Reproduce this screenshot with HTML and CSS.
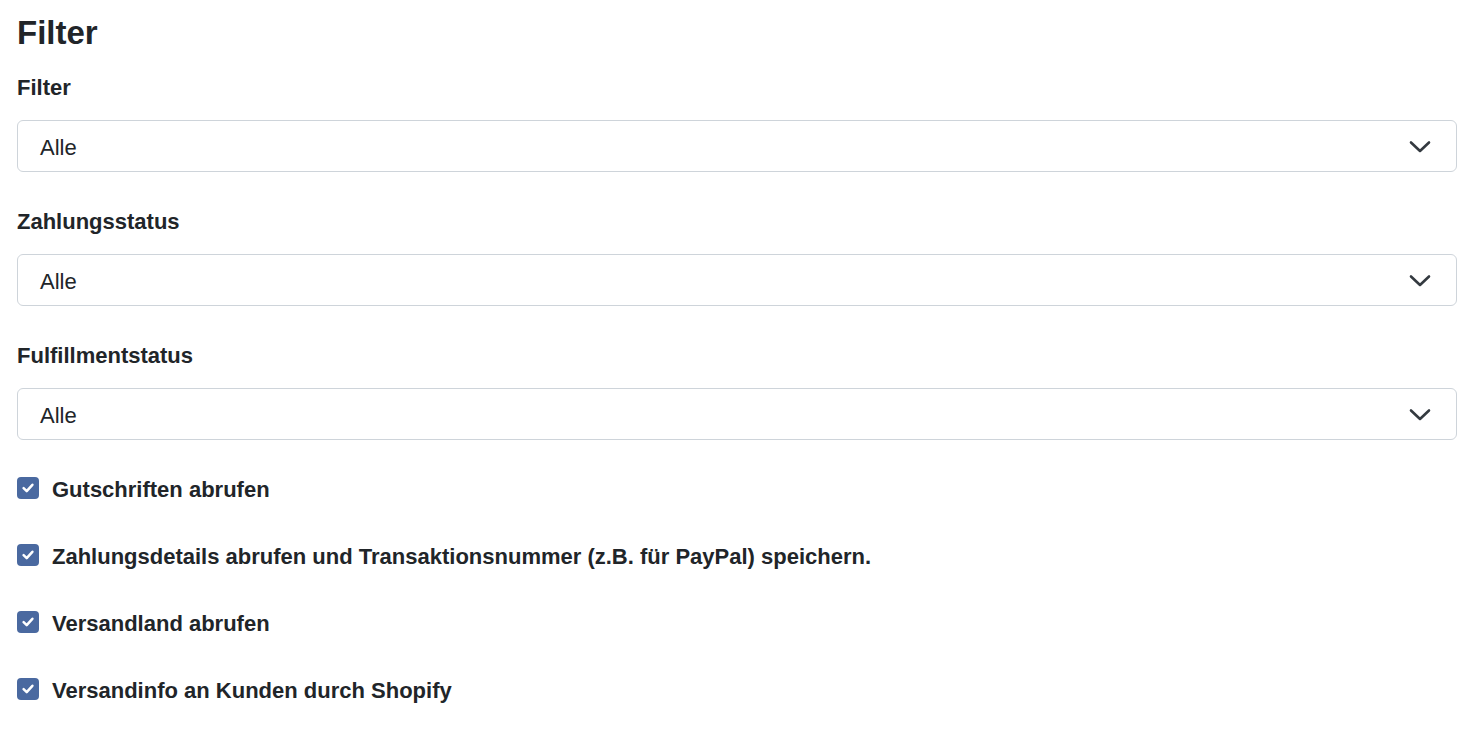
FILE: index.html
```html
<!DOCTYPE html>
<html lang="de">
<head>
<meta charset="utf-8">
<title>Filter</title>
<link rel="stylesheet" href="styles.css">
</head>
<body>
<main class="page">
  <h1 class="title">Filter</h1>

  <div class="field">
    <label class="label">Filter</label>
    <div class="select"><span class="value">Alle</span>
      <svg class="chev" width="22" height="14" viewBox="0 0 22 14"><path d="M2 2.5 L11 11 L20 2.5" fill="none" stroke="#343a40" stroke-width="2.6" stroke-linecap="round" stroke-linejoin="round"/></svg>
    </div>
  </div>

  <div class="field">
    <label class="label">Zahlungsstatus</label>
    <div class="select"><span class="value">Alle</span>
      <svg class="chev" width="22" height="14" viewBox="0 0 22 14"><path d="M2 2.5 L11 11 L20 2.5" fill="none" stroke="#343a40" stroke-width="2.6" stroke-linecap="round" stroke-linejoin="round"/></svg>
    </div>
  </div>

  <div class="field">
    <label class="label">Fulfillmentstatus</label>
    <div class="select"><span class="value">Alle</span>
      <svg class="chev" width="22" height="14" viewBox="0 0 22 14"><path d="M2 2.5 L11 11 L20 2.5" fill="none" stroke="#343a40" stroke-width="2.6" stroke-linecap="round" stroke-linejoin="round"/></svg>
    </div>
  </div>

  <div class="checks">
    <div class="check"><span class="box"><svg width="14" height="14" viewBox="0 0 14 14"><path d="M2.6 7.2 L5.7 10.2 L11.4 3.8" fill="none" stroke="#fff" stroke-width="2.5" stroke-linecap="round" stroke-linejoin="round"/></svg></span><span class="ctext">Gutschriften abrufen</span></div>
    <div class="check"><span class="box"><svg width="14" height="14" viewBox="0 0 14 14"><path d="M2.6 7.2 L5.7 10.2 L11.4 3.8" fill="none" stroke="#fff" stroke-width="2.5" stroke-linecap="round" stroke-linejoin="round"/></svg></span><span class="ctext">Zahlungsdetails abrufen und Transaktionsnummer (z.B. für PayPal) speichern.</span></div>
    <div class="check"><span class="box"><svg width="14" height="14" viewBox="0 0 14 14"><path d="M2.6 7.2 L5.7 10.2 L11.4 3.8" fill="none" stroke="#fff" stroke-width="2.5" stroke-linecap="round" stroke-linejoin="round"/></svg></span><span class="ctext">Versandland abrufen</span></div>
    <div class="check"><span class="box"><svg width="14" height="14" viewBox="0 0 14 14"><path d="M2.6 7.2 L5.7 10.2 L11.4 3.8" fill="none" stroke="#fff" stroke-width="2.5" stroke-linecap="round" stroke-linejoin="round"/></svg></span><span class="ctext">Versandinfo an Kunden durch Shopify</span></div>
  </div>
</main>
</body>
</html>
```

FILE: styles.css
```css
* { box-sizing: border-box; }
html, body { margin: 0; padding: 0; background: #fff; }
body {
  font-family: "Liberation Sans", Arial, sans-serif;
  color: #212529;
}
.page {
  padding: 13px 27px 0 17px;
  display: flex;
  flex-direction: column;
}
.title {
  margin: 0 0 20px 0;
  font-size: 33px;
  line-height: 40px;
  font-weight: 700;
}
.field {
  display: flex;
  flex-direction: column;
  margin-bottom: 35px;
}
.field:last-of-type { margin-bottom: 33px; }
.label {
  font-size: 22px;
  line-height: 30px;
  font-weight: 700;
  margin-bottom: 17px;
}
.select {
  height: 52px;
  border: 1px solid #ced4da;
  border-radius: 6px;
  display: flex;
  align-items: center;
  justify-content: space-between;
  padding: 0 25px 0 22px;
}
.value {
  font-size: 22px;
  line-height: 30px;
  padding-top: 3px;
}
.chev { display: block; margin-top: 2px; }
.checks {
  display: flex;
  flex-direction: column;
  gap: 37px;
}
.check {
  display: flex;
  align-items: center;
  gap: 13px;
  height: 30px;
}
.box {
  width: 22px;
  height: 22px;
  border-radius: 4px;
  background: #4a69a0;
  display: flex;
  align-items: center;
  justify-content: center;
  margin-top: -4px;
}
.box svg { display: block; }
.ctext {
  font-size: 22px;
  line-height: 30px;
  font-weight: 700;
}
```
